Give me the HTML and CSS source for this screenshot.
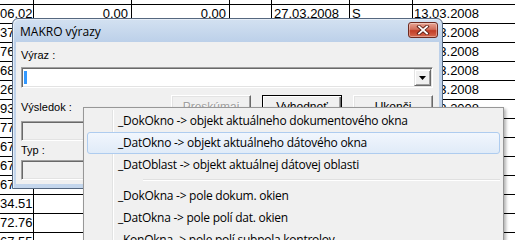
FILE: index.html
```html
<!DOCTYPE html>
<html lang="sk">
<head>
    <meta charset="UTF-8">
    <title>MAKRO výrazy</title>
    <link rel="stylesheet" href="styles.css">
</head>
<body>
    <div class="sheet">
        <div class="row"><span class="c c0"></span><span class="c c1"></span><span class="c c2"></span><span class="c c3"></span><span class="c c4"></span><span class="c c5"></span><span class="c c6"></span></div>
        <div class="row"><span class="c c0">06.02</span><span class="c c1">0.00</span><span class="c c2">0.00</span><span class="c c3"></span><span class="c c4">27.03.2008</span><span class="c c5">S</span><span class="c c6">13.03.2008</span></div>
        <div class="row"><span class="c c0">37.15</span><span class="c c1">0.00</span><span class="c c2">0.00</span><span class="c c3"></span><span class="c c4">27.03.2008</span><span class="c c5">S</span><span class="c c6">14.03.2008</span></div>
        <div class="row"><span class="c c0">76.40</span><span class="c c1">0.00</span><span class="c c2">0.00</span><span class="c c3"></span><span class="c c4">27.03.2008</span><span class="c c5">S</span><span class="c c6">14.03.2008</span></div>
        <div class="row"><span class="c c0">68.22</span><span class="c c1">0.00</span><span class="c c2">0.00</span><span class="c c3"></span><span class="c c4">27.03.2008</span><span class="c c5">S</span><span class="c c6">17.03.2008</span></div>
        <div class="row"><span class="c c0">26.85</span><span class="c c1">0.00</span><span class="c c2">0.00</span><span class="c c3"></span><span class="c c4">27.03.2008</span><span class="c c5">S</span><span class="c c6">18.03.2008</span></div>
        <div class="row"><span class="c c0">93.10</span><span class="c c1">0.00</span><span class="c c2">0.00</span><span class="c c3"></span><span class="c c4">27.03.2008</span><span class="c c5">S</span><span class="c c6">19.03.2008</span></div>
        <div class="row"><span class="c c0">77.04</span><span class="c c1">0.00</span><span class="c c2">0.00</span><span class="c c3"></span><span class="c c4">27.03.2008</span><span class="c c5">S</span><span class="c c6">20.03.2008</span></div>
        <div class="row"><span class="c c0">67.55</span><span class="c c1">0.00</span><span class="c c2">0.00</span><span class="c c3"></span><span class="c c4">27.03.2008</span><span class="c c5">S</span><span class="c c6">21.03.2008</span></div>
        <div class="row"><span class="c c0">67.55</span><span class="c c1">0.00</span><span class="c c2">0.00</span><span class="c c3"></span><span class="c c4">27.03.2008</span><span class="c c5">S</span><span class="c c6">24.03.2008</span></div>
        <div class="row"><span class="c c0">67.55</span><span class="c c1">0.00</span><span class="c c2">0.00</span><span class="c c3"></span><span class="c c4">27.03.2008</span><span class="c c5">S</span><span class="c c6">25.03.2008</span></div>
        <div class="row"><span class="c c0">34.51</span><span class="c c1"></span><span class="c c2"></span><span class="c c3"></span><span class="c c4"></span><span class="c c5"></span><span class="c c6"></span></div>
        <div class="row"><span class="c c0">72.76</span><span class="c c1"></span><span class="c c2"></span><span class="c c3"></span><span class="c c4"></span><span class="c c5"></span><span class="c c6"></span></div>
        <div class="row"><span class="c c0">67.55</span><span class="c c1"></span><span class="c c2"></span><span class="c c3"></span><span class="c c4"></span><span class="c c5"></span><span class="c c6"></span></div>
    </div>

    <div class="dlg">
        <div class="dlg-title">
            <span class="dlg-caption">MAKRO výrazy</span>
            <span class="close">
                <svg width="14" height="10" viewBox="0 0 14 10">
                    <path d="M3 1.5 L11 8.5 M11 1.5 L3 8.5" stroke="#5b1d14" stroke-width="3.6" stroke-linecap="square"/>
                    <path d="M3 1.5 L11 8.5 M11 1.5 L3 8.5" stroke="#fff" stroke-width="1.8" stroke-linecap="square"/>
                </svg>
            </span>
        </div>
        <div class="dlg-body">
            <div class="lbl">Výraz :</div>
            <div class="combo">
                <span class="caret"></span>
                <span class="drop">
                    <svg width="7" height="4" viewBox="0 0 7 4"><path d="M0 0 H7 L3.5 4 Z" fill="#000"/></svg>
                </span>
            </div>
            <div class="act-row">
                <span class="lbl">Výsledok :</span>
                <div class="btns">
                    <button class="btn" disabled>Preskúmaj</button>
                    <button class="btn def">Vyhodnoť</button>
                    <button class="btn">Ukonči</button>
                </div>
            </div>
            <div class="field"></div>
            <div class="lbl lbl-typ">Typ :</div>
            <div class="field"></div>
        </div>
    </div>

    <ul class="menu">
        <li>_DokOkno -&gt; objekt aktuálneho dokumentového okna</li>
        <li class="cur">_DatOkno -&gt; objekt aktuálneho dátového okna</li>
        <li>_DatOblast -&gt; objekt aktuálnej dátovej oblasti</li>
        <li class="sep"></li>
        <li>_DokOkna -&gt; pole dokum. okien</li>
        <li>_DatOkna -&gt; pole polí dat. okien</li>
        <li>_KonOkna -&gt; pole polí subpola kontrolov</li>
    </ul>
</body>
</html>
```

FILE: styles.css
```css
* {
    margin: 0;
    padding: 0;
    box-sizing: border-box;
    list-style: none;
}

body {
    width: 515px;
    height: 240px;
    overflow: hidden;
    position: relative;
    background: #fff;
    font-family: "Liberation Sans", Arial, sans-serif;
    color: #000;
}

/* grid in the background */
.sheet {
    margin-top: -14px;
    height: 254px;
    overflow: hidden;
    font-size: 13px;
}

.sheet .row {
    display: flex;
    height: 19px;
}

.sheet .c {
    flex: none;
    height: 19px;
    border-right: 1px solid #000;
    border-bottom: 1px solid #000;
    line-height: 18px;
    white-space: nowrap;
    overflow: hidden;
    padding: 0 2px;
}

.sheet .c0 { width: 34px; text-align: right; padding-right: 3px; padding-left: 0; }
.sheet .c1 { width: 98px; text-align: right; padding-right: 3px; }
.sheet .c2 { width: 98px; text-align: right; padding-right: 3px; }
.sheet .c3 { width: 42px; }
.sheet .c4 { width: 78px; }
.sheet .c5 { width: 63px; }
.sheet .c6 { flex: 1; border-right: 0; padding-left: 1px; }

/* dialog window */
.dlg {
    position: absolute;
    left: 12px;
    top: 18px;
    width: 431px;
    height: 171px;
    border: 1px solid #55677f;
    border-radius: 6px 6px 0 0;
    background: linear-gradient(#d3e1f1, #bcd0e9 23px, #c4d6ec);
    padding: 0 3px 4px;
    display: flex;
    flex-direction: column;
    box-shadow: inset 1px 1px 0 #e6eef8;
}

.dlg-title {
    height: 23px;
    display: flex;
    align-items: flex-start;
    justify-content: space-between;
    padding: 0 1px 0 4px;
}

.dlg-caption {
    font-family: "Open Sans", sans-serif;
    font-size: 12px;
    line-height: 26px;
}

.close {
    margin-top: 3px;
    width: 30px;
    height: 16px;
    border: 1px solid #6e2a20;
    border-radius: 3px;
    background: linear-gradient(#e8a594, #d16f5c 45%, #c13c26 55%, #d66a50);
    display: flex;
    align-items: center;
    justify-content: center;
    box-shadow: inset 0 0 0 1px rgba(255, 255, 255, .35);
}

.dlg-body {
    flex: 1;
    background: #f0f0f0;
    padding: 0 6px 0 5px;
    font-size: 11px;
    display: flex;
    flex-direction: column;
}

.lbl {
    line-height: 14px;
    margin-top: 6px;
}

.combo {
    margin-top: 5px;
    height: 21px;
    background: #fff;
    border: 1px solid;
    border-color: #a0a0a0 #fff #fff #a0a0a0;
    box-shadow: inset 1px 1px 0 #696969, inset -1px -1px 0 #e3e3e3;
    display: flex;
    align-items: center;
    justify-content: space-between;
    padding: 0 1px 0 2px;
}

.caret {
    width: 3px;
    height: 13px;
    background: #3399ff;
}

.drop {
    width: 17px;
    height: 17px;
    background: #f0f0f0;
    border: 1px solid;
    border-color: #e3e3e3 #696969 #696969 #e3e3e3;
    box-shadow: inset 1px 1px 0 #fff, inset -1px -1px 0 #a0a0a0;
    display: flex;
    align-items: center;
    justify-content: center;
}

.act-row {
    margin-top: 7px;
    display: flex;
    align-items: center;
}

.act-row .lbl {
    margin-top: 0;
}

.btns {
    margin-left: auto;
    display: flex;
    gap: 11px;
}

.btn {
    width: 80px;
    height: 23px;
    background: #f0f0f0;
    font-family: "Liberation Sans", Arial, sans-serif;
    font-size: 12px;
    color: #000;
    border: 1px solid;
    border-color: #fff #696969 #696969 #fff;
    box-shadow: inset -1px -1px 0 #a0a0a0, inset 1px 1px 0 #e3e3e3;
}

.btn.def {
    border-color: #000;
    box-shadow: inset 1px 1px 0 #fff, inset -1px -1px 0 #696969, inset -2px -2px 0 #a0a0a0;
}

.btn:disabled {
    color: #a0a0a0;
    text-shadow: 1px 1px 0 #fff;
}

.field {
    margin-top: 3px;
    height: 20px;
    background: #f0f0f0;
    border: 1px solid;
    border-color: #a0a0a0 #fff #fff #a0a0a0;
    box-shadow: inset 1px 1px 0 #696969, inset -1px -1px 0 #e3e3e3;
}

.lbl-typ {
    margin-top: 2px;
}

/* context menu */
.menu {
    position: absolute;
    left: 83px;
    top: 107px;
    width: 421px;
    height: 140px;
    overflow: hidden;
    background: #f0f0f0;
    border: 1px solid #979797;
    box-shadow: 2px 2px 3px rgba(0, 0, 0, .3);
    padding: 2px 3px;
    font-family: "Open Sans", sans-serif;
    font-size: 12px;
    letter-spacing: -0.25px;
}

.menu::before {
    content: "";
    position: absolute;
    left: 28px;
    top: 2px;
    bottom: 0;
    width: 1px;
    background: #e2e3e3;
    box-shadow: 1px 0 0 #fff;
}

.menu li {
    position: relative;
    height: 22px;
    line-height: 20px;
    padding-left: 30px;
    border: 1px solid transparent;
    border-radius: 3px;
    white-space: nowrap;
}

.menu li.cur {
    border-color: #aeccef;
    background: linear-gradient(#f1f6fd, #e0ebf8);
}

.menu li.sep {
    height: 6px;
    border: 0;
    margin-left: 26px;
}

.menu li.sep::after {
    content: "";
    display: block;
    margin-top: 3px;
    height: 1px;
    background: #e0e0e0;
    box-shadow: 0 1px 0 #fff;
}
```
